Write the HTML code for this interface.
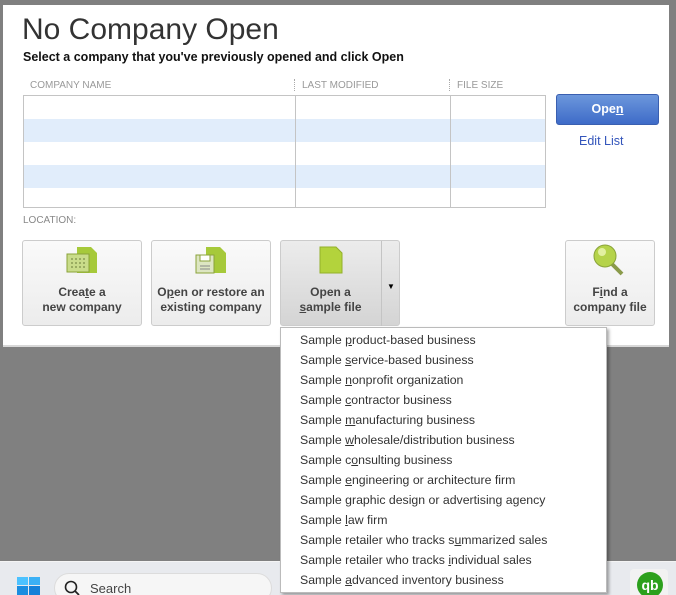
<!DOCTYPE html>
<html><head><style>
*{margin:0;padding:0;box-sizing:border-box}
html,body{width:676px;height:595px;overflow:hidden}
body{background:#808080;position:relative;font-family:"Liberation Sans",sans-serif}
.a{position:absolute}
.win{left:3px;top:5px;width:666px;height:342px;background:#fff;border-bottom:2px solid #d8d8d8}
.btn{position:absolute;top:240px;height:86px;border:1px solid #ccc;border-radius:3px;background:linear-gradient(#fafafa,#ececec);text-align:center;font-size:12px;font-weight:bold;color:#444;line-height:15px}
.btn .t{position:absolute;left:0;right:0;top:44px}
.menu{left:280px;top:327px;width:327px;height:266px;background:#fff;border:1px solid #bbb;box-shadow:2px 2px 3px rgba(0,0,0,.35)}
.menu div{height:20px;line-height:20px;padding-left:19px;font-size:12.3px;color:#333}
.hd{font-size:10px;color:#999;top:80px}
</style></head><body>
<div class="a win"></div>
<div class="a" style="left:22px;top:13px;font-size:30px;color:#333">No Company Open</div>
<div class="a" style="left:23px;top:50px;font-size:12.5px;font-weight:bold;color:#111">Select a company that you've previously opened and click Open</div>
<div class="a hd" style="left:30px">COMPANY NAME</div>
<div class="a hd" style="left:302px">LAST MODIFIED</div>
<div class="a hd" style="left:457px">FILE SIZE</div>
<div class="a" style="left:294px;top:79px;height:12px;border-left:1px dotted #aaa"></div>
<div class="a" style="left:449px;top:79px;height:12px;border-left:1px dotted #aaa"></div>
<div class="a" style="left:23px;top:95px;width:523px;height:113px;border:1px solid #c4c4c4;background:linear-gradient(#fff 0,#fff 23px,#e1edfb 23px,#e1edfb 46px,#fff 46px,#fff 69px,#e1edfb 69px,#e1edfb 92px,#fff 92px)"></div>
<div class="a" style="left:295px;top:96px;width:1px;height:111px;background:#c4c4c4"></div>
<div class="a" style="left:450px;top:96px;width:1px;height:111px;background:#c4c4c4"></div>
<div class="a" style="left:23px;top:215px;font-size:10px;color:#888">LOCATION:</div>
<div class="a" style="left:556px;top:94px;width:103px;height:31px;border:1px solid #3a5fb0;border-radius:3px;background:linear-gradient(#6c97dc,#3e6bc8);color:#fff;font-weight:bold;font-size:12.5px;text-align:center;line-height:29px">Ope<u>n</u></div>
<div class="a" style="left:579px;top:134px;font-size:12.5px;color:#3355bb">Edit List</div>

<div class="btn" style="left:22px;width:120px">
<svg class="a" style="left:42px;top:4px" width="34" height="30"><path d="M12 2h14l6 6v20H12z" fill="#a6c93a"/><rect x="2" y="9" width="22" height="18" fill="#c9dc8a" stroke="#8aa33a"/><path d="M6 14h14M6 18h14M6 22h14" stroke="#6b7b3a" stroke-dasharray="2 2"/></svg>
<div class="t">Crea<u>t</u>e a<br>new company</div></div>
<div class="btn" style="left:151px;width:120px">
<svg class="a" style="left:42px;top:4px" width="34" height="30"><path d="M12 2h14l6 6v20H12z" fill="#a6c93a"/><rect x="2" y="10" width="18" height="18" fill="#dde6c2" stroke="#8aa33a"/><rect x="6" y="10" width="10" height="6" fill="#fff" stroke="#8aa33a"/><path d="M6 21h10M6 24h10" stroke="#888"/></svg>
<div class="t">O<u>p</u>en or restore an<br>existing company</div></div>
<div class="btn" style="left:280px;width:120px;background:linear-gradient(#ececec,#d4d4d4)">
<svg class="a" style="left:37px;top:4px" width="26" height="30"><path d="M2 2h16l6 6v20H2z" fill="#b3d33c" stroke="#93b02a"/></svg>
<div class="t" style="right:19px">Open a<br><u>s</u>ample file</div>
<div class="a" style="left:100px;top:0;height:85px;border-left:1px solid #c4c4c4"></div>
<div class="a" style="left:106px;top:38px;font-size:8px;color:#000">▼</div></div>
<div class="btn" style="left:565px;width:90px">
<svg class="a" style="left:26px;top:2px" width="36" height="34"><line x1="18" y1="19" x2="30" y2="31" stroke="#8a9a4a" stroke-width="4"/><circle cx="13" cy="13" r="11" fill="#b5d34a" stroke="#8aa33a"/><circle cx="10" cy="9" r="4" fill="#e2f0a0"/></svg>
<div class="t">F<u>i</u>nd a<br>company file</div></div>

<div class="a" style="left:0;top:561px;width:676px;height:34px;background:#e8eaee;border-top:1px solid #f4f4f4"></div>
<svg class="a" style="left:17px;top:577px" width="24" height="18"><rect x="0" y="0" width="11" height="8" fill="#4cc2ff"/><rect x="12" y="0" width="11" height="8" fill="#3bb0f5"/><rect x="0" y="9" width="11" height="9" fill="#1a8de0"/><rect x="12" y="9" width="11" height="9" fill="#1580d8"/></svg>
<div class="a" style="left:54px;top:573px;width:218px;height:30px;border-radius:15px;background:#f6f6f6;border:1px solid #dcdcdc"></div>
<svg class="a" style="left:64px;top:580px" width="16" height="16"><circle cx="7" cy="7" r="5.5" fill="none" stroke="#222" stroke-width="1.6"/><line x1="11" y1="11" x2="15" y2="15" stroke="#222" stroke-width="1.8"/></svg>
<div class="a" style="left:90px;top:581px;font-size:13px;color:#444">Search</div>
<div class="a" style="left:630px;top:569px;width:38px;height:30px;background:#f2f2f2;border-radius:4px"></div>
<div class="a" style="left:637px;top:572px;width:26px;height:26px;border-radius:50%;background:#2ca01c;color:#fff;font-weight:bold;font-size:14px;text-align:center;line-height:26px">qb</div>

<div class="a menu">
<div style="margin-top:2px">Sample <u>p</u>roduct-based business</div>
<div>Sample <u>s</u>ervice-based business</div>
<div>Sample <u>n</u>onprofit organization</div>
<div>Sample <u>c</u>ontractor business</div>
<div>Sample <u>m</u>anufacturing business</div>
<div>Sample <u>w</u>holesale/distribution business</div>
<div>Sample c<u>o</u>nsulting business</div>
<div>Sample <u>e</u>ngineering or architecture firm</div>
<div>Sample <u>g</u>raphic design or advertising agency</div>
<div>Sample <u>l</u>aw firm</div>
<div>Sample retailer who tracks s<u>u</u>mmarized sales</div>
<div>Sample retailer who tracks <u>i</u>ndividual sales</div>
<div>Sample <u>a</u>dvanced inventory business</div>
</div>
</body></html>
